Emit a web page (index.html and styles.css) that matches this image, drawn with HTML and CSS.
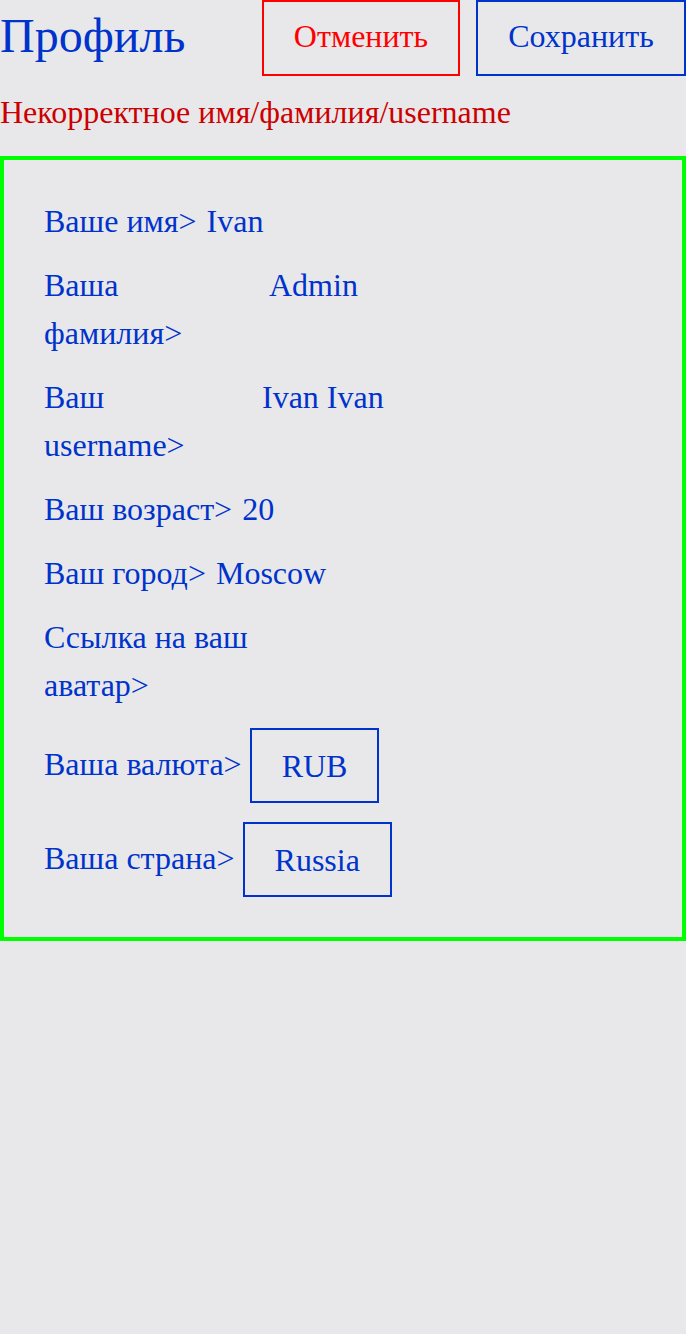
FILE: index.html
```html
<!DOCTYPE html>
<html lang="ru">
<head>
<meta charset="utf-8">
<title>Профиль</title>
<link rel="stylesheet" href="styles.css">
</head>
<body>
<div class="page">
  <header class="header">
    <h1 class="title">Профиль</h1>
    <div class="actions">
      <button class="btn btn--cancel">Отменить</button>
      <button class="btn btn--save">Сохранить</button>
    </div>
  </header>
  <p class="error">Некорректное имя/фамилия/username</p>
  <section class="card">
    <div class="row"><span class="label">Ваше имя&gt;</span><span class="value">Ivan</span></div>
    <div class="row"><span class="label label--surname">Ваша фамилия&gt;</span><span class="value">Admin</span></div>
    <div class="row"><span class="label label--username">Ваш username&gt;</span><span class="value">Ivan Ivan</span></div>
    <div class="row"><span class="label">Ваш возраст&gt;</span><span class="value">20</span></div>
    <div class="row"><span class="label">Ваш город&gt;</span><span class="value">Moscow</span></div>
    <div class="row"><span class="label label--avatar">Ссылка на ваш аватар&gt;</span></div>
    <div class="row row--select"><span class="label">Ваша валюта&gt;</span><span class="select">RUB</span></div>
    <div class="row row--select"><span class="label">Ваша страна&gt;</span><span class="select">Russia</span></div>
  </section>
</div>
</body>
</html>
```
FILE: styles.css
```css
* { box-sizing: border-box; }
html, body {
  margin: 0;
  padding: 0;
  background: #e8e8ea;
}
body {
  font-family: "Liberation Serif", "Times New Roman", serif;
  color: #0033cc;
}
.page {
  width: 686px;
}
.header {
  display: flex;
  justify-content: space-between;
  align-items: flex-start;
  height: 76px;
}
.title {
  margin: 0;
  padding-top: 8px;
  font-size: 48px;
  font-weight: normal;
  line-height: normal;
  color: #0033cc;
}
.actions {
  display: flex;
  gap: 16px;
}
.btn {
  font-family: "Liberation Serif", "Times New Roman", serif;
  font-size: 32px;
  height: 76px;
  padding: 0 20px 4px;
  background: transparent;
  border: 2px solid;
  cursor: pointer;
}
.btn--cancel {
  width: 198px;
  color: #ff0000;
  border-color: #ff0000;
}
.btn--save {
  width: 210px;
  color: #0033cc;
  border-color: #0033cc;
}
.error {
  margin: 12px 0 20px;
  font-size: 32px;
  line-height: 48px;
  color: #cc0000;
}
.card {
  border: 4px solid #00ff00;
  padding: 37px 40px 40px;
  display: flex;
  flex-direction: column;
  gap: 16px;
  font-size: 32px;
  line-height: 48px;
}
.row {
  display: flex;
  align-items: flex-start;
  gap: 10px;
}
.label--surname { width: 215px; }
.label--username { width: 208px; }
.label--avatar { width: 215px; }
.row--select {
  align-items: center;
  gap: 8px;
}
.select {
  margin-top: 3px;
  border: 2px solid #0033cc;
  padding: 12px 30px 11px;
  line-height: 48px;
}
```
